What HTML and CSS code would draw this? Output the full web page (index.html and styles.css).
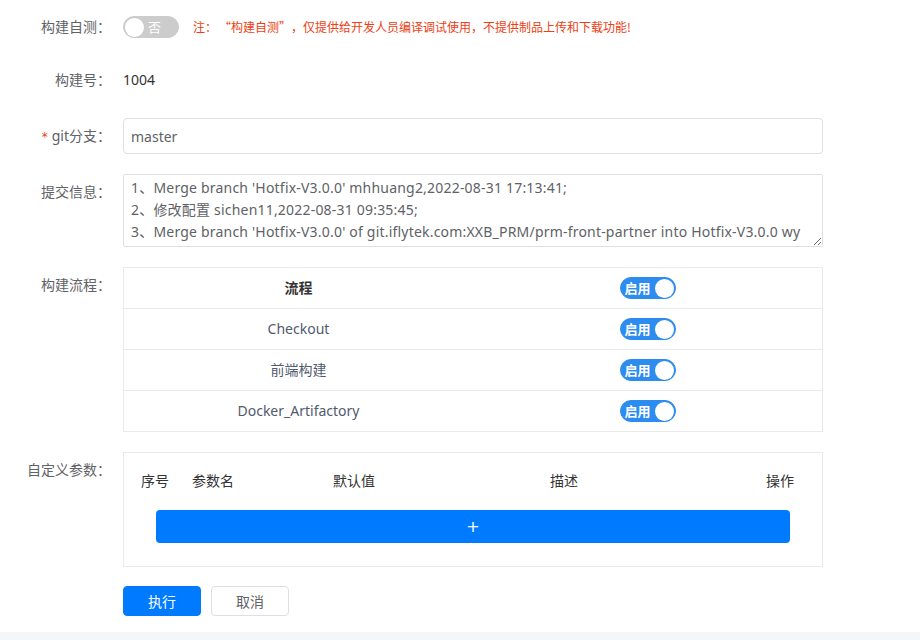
FILE: index.html
```html
<!DOCTYPE html>
<html lang="zh-CN">
<head>
<meta charset="utf-8">
<title>构建</title>
<link rel="stylesheet" href="styles.css">
</head>
<body>
<div class="card">
  <form class="form">
    <div class="form-item first">
      <label class="label">构建自测：</label>
      <div class="content">
        <span class="switch off"><span class="switch-knob"></span><span class="switch-text">否</span></span>
        <span class="note">注：<span class="q ql">“</span>构建自测<span class="q qr">”</span>，仅提供给开发人员编译调试使用，不提供制品上传和下载功能!</span>
      </div>
    </div>
    <div class="form-item">
      <label class="label">构建号：</label>
      <div class="content value">1004</div>
    </div>
    <div class="form-item">
      <label class="label"><span class="req">*</span>git分支：</label>
      <div class="content"><input class="input" type="text" value="master"></div>
    </div>
    <div class="form-item">
      <label class="label">提交信息：</label>
      <div class="content"><textarea class="textarea" wrap="off">1、Merge branch 'Hotfix-V3.0.0' mhhuang2,2022-08-31 17:13:41;
2、修改配置 sichen11,2022-08-31 09:35:45;
3、Merge branch 'Hotfix-V3.0.0' of git.iflytek.com:XXB_PRM/prm-front-partner into Hotfix-V3.0.0 wy
zhang12,2022-08-30 19:02:11;
4、修复页面样式问题 wyzhang12,2022-08-30 18:55:20;
5、Merge branch 'dev' into Hotfix-V3.0.0 mhhuang2,2022-08-30 16:40:03;
6、优化列表查询 sichen11,2022-08-30 14:12:37;
7、修改接口地址 mhhuang2,2022-08-29 20:31:09;
8、Merge branch 'Hotfix-V3.0.0' mhhuang2,2022-08-29 17:05:52;
9、新增导出功能 wyzhang12,2022-08-29 11:22:16;
10、修复已知问题 sichen11,2022-08-28 10:08:44;</textarea></div>
    </div>
    <div class="form-item">
      <label class="label">构建流程：</label>
      <div class="content">
        <table class="flow">
          <tr><th>流程</th><th><span class="switch on"><span class="switch-text">启用</span><span class="switch-knob"></span></span></th></tr>
          <tr><td>Checkout</td><td><span class="switch on"><span class="switch-text">启用</span><span class="switch-knob"></span></span></td></tr>
          <tr><td>前端构建</td><td><span class="switch on"><span class="switch-text">启用</span><span class="switch-knob"></span></span></td></tr>
          <tr><td>Docker_Artifactory</td><td><span class="switch on"><span class="switch-text">启用</span><span class="switch-knob"></span></span></td></tr>
        </table>
      </div>
    </div>
    <div class="form-item params-item">
      <label class="label">自定义参数：</label>
      <div class="content">
        <div class="params">
          <div class="params-head">
            <span>序号</span><span>参数名</span><span>默认值</span><span>描述</span><span>操作</span>
          </div>
          <button type="button" class="add-btn">+</button>
        </div>
      </div>
    </div>
    <div class="form-item actions">
      <div class="label empty"></div>
      <div class="content buttons">
        <button type="button" class="btn btn-primary">执行</button>
        <button type="button" class="btn btn-default">取消</button>
      </div>
    </div>
  </form>
</div>
</body>
</html>
```
FILE: styles.css
```css
html, body {
  margin: 0;
  padding: 0;
}
body {
  background: #f5f6f7;
  font-family: "Noto Sans", "Noto Sans CJK SC", sans-serif;
  font-size: 14px;
  color: #515a6e;
}
.card {
  background: #fff;
  height: 632px;
  box-sizing: border-box;
  box-shadow: 0 2px 4px rgba(0, 0, 0, 0.12);
}
.form {
  padding-top: 9px;
}
.form-item {
  display: flex;
  margin-bottom: 20px;
}
.form-item.first {
  margin-bottom: 17px;
}
.form-item.params-item {
  margin-bottom: 19px;
}
.label {
  flex: none;
  width: 123px;
  height: 36px;
  box-sizing: border-box;
  padding-right: 12px;
  text-align: right;
  line-height: 36px;
  font-size: 14px;
  color: #606266;
  white-space: nowrap;
}
.label.empty {
  height: 30px;
}
.req {
  color: #ed4014;
  font-size: 12px;
  margin-right: 4px;
  font-family: "DejaVu Sans", sans-serif;
}
.content {
  flex: none;
  width: 700px;
  min-height: 36px;
  line-height: 36px;
  display: flex;
  align-items: center;
}
.value {
  height: 36px;
  color: #333;
}
.note {
  margin-left: 14px;
  font-family: "Noto Sans CJK SC", sans-serif;
  font-size: 12px;
  color: #ed4014;
  line-height: 20px;
}
.q {
  display: inline-block;
  width: 12px;
}
.ql {
  text-align: right;
  margin-left: 2px;
}
.qr {
  text-align: left;
}

/* switch */
.switch {
  box-sizing: border-box;
  width: 56px;
  height: 22px;
  border-radius: 11px;
  display: inline-flex;
  align-items: center;
  padding: 0 1px;
  line-height: 20px;
  font-family: "Noto Sans CJK SC", sans-serif;
  font-size: 12px;
  color: #fff;
  vertical-align: middle;
}
.switch.off {
  background: #ccc;
  border: 1px solid #ccc;
}
.switch.on {
  background: #2d8cf0;
  border: 1px solid #2d8cf0;
  justify-content: space-between;
  padding-left: 4px;
}
.switch-knob {
  width: 19px;
  height: 19px;
  border-radius: 50%;
  background: #fff;
  flex: none;
}
.switch.off .switch-text {
  margin-left: 4px;
  font-size: 13px;
}
.switch.on .switch-text {
  font-weight: 700;
  font-size: 13px;
}

/* inputs */
.input {
  box-sizing: border-box;
  width: 700px;
  height: 36px;
  border: 1px solid #dcdfe6;
  border-radius: 4px;
  padding: 0 7px;
  font-family: inherit;
  font-size: 14px;
  color: #606266;
  outline: none;
  margin: 0;
}
.textarea {
  box-sizing: border-box;
  display: block;
  width: 700px;
  height: 73px;
  border: 1px solid #dcdfe6;
  border-radius: 2px;
  padding: 2px 0 2px 7px;
  font-family: inherit;
  font-size: 14px;
  line-height: 22px;
  letter-spacing: 0.2px;
  color: #606266;
  overflow-y: scroll;
  overflow-x: hidden;
  white-space: pre;
  resize: vertical;
  outline: none;
  margin: 0;
}
.textarea::-webkit-scrollbar {
  width: 10px;
}
.textarea::-webkit-scrollbar-track {
  background: #e2e2e2;
}
.textarea::-webkit-scrollbar-thumb {
  background: #a3a3a3;
  border-radius: 5px;
  min-height: 18px;
}

/* flow table */
.flow {
  width: 700px;
  border-collapse: collapse;
  border: 1px solid #e8eaec;
  table-layout: fixed;
}
.flow th, .flow td {
  height: 40px;
  padding: 0;
  border-bottom: 1px solid #e8eaec;
  text-align: center;
  vertical-align: middle;
  font-size: 14px;
  line-height: 20px;
  color: #515a6e;
}
.flow th {
  font-weight: 700;
}
.flow th:first-child {
  color: #333;
}
.flow .switch {
  font-weight: 400;
}

/* params */
.params {
  box-sizing: border-box;
  width: 700px;
  border: 1px solid #e8eaec;
  padding: 18px 32px 23px;
  line-height: 20px;
}
.params-head {
  display: grid;
  grid-template-columns: 51px 141px 217px 216px auto;
  margin: 0 -15px;
  line-height: 20px;
  height: 20px;
  color: #333;
  font-size: 14px;
}
.add-btn {
  display: block;
  width: 100%;
  height: 33px;
  margin-top: 19px;
  border: none;
  border-radius: 4px;
  background: #007bff;
  color: #fff;
  font-size: 16px;
  font-family: "DejaVu Sans", sans-serif;
  padding: 0;
  line-height: 33px;
}

/* buttons */
.buttons {
  gap: 10px;
  line-height: normal;
  min-height: 30px;
}
.btn {
  box-sizing: border-box;
  width: 78px;
  height: 30px;
  border-radius: 4px;
  font-family: "Noto Sans CJK SC", sans-serif;
  font-size: 14px;
  padding: 0;
  margin: 0;
}
.btn-primary {
  background: #007bff;
  border: 1px solid #007bff;
  color: #fff;
}
.btn-default {
  background: #fff;
  border: 1px solid #dcdfe6;
  color: #606266;
}
```
